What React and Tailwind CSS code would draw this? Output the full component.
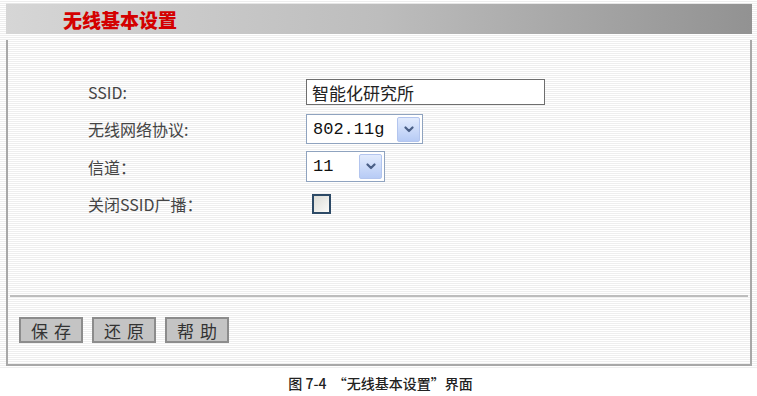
const cjk = 'font-["Noto_Sans_CJK_SC","Noto_Sans",sans-serif]'

function Chevron() {
  return (
    <svg width="10" height="7" viewBox="0 0 10 7" fill="none">
      <path d="M1.5 1.5l3.5 3.5 3.5-3.5" stroke="#4a5f86" strokeWidth="2.2" strokeLinecap="round" strokeLinejoin="round" />
    </svg>
  )
}

function Select({ value, width }) {
  return (
    <div className={`flex items-center justify-between ${width} h-full border border-[#8fa3bf] bg-white pl-[6px] pr-[2px]`}>
      <span className='font-["Liberation_Mono",monospace] text-[17px] text-[#111] leading-none'>{value}</span>
      <span className="flex items-center justify-center w-[23px] h-[25px] rounded-[2px] border border-[#b3c5ee] bg-gradient-to-b from-[#e2ebfd] to-[#b7cbf5]">
        <Chevron />
      </span>
    </div>
  )
}

function Row({ label, height, mt, children }) {
  return (
    <div className={`flex items-center ${height} ${mt}`}>
      <div className={`w-[298px] pl-[80px] text-[16px] text-[#444] leading-none ${cjk}`}>{label}</div>
      <div className="flex items-center h-full">{children}</div>
    </div>
  )
}

function Btn({ children }) {
  return (
    <button className={`w-[64px] h-[26px] border-2 border-[#8c8c8c] bg-[#c4c4c4] text-[17px] tracking-[6px] pl-[6px] text-[#333] leading-none ${cjk}`}>
      {children}
    </button>
  )
}

export default function App() {
  return (
    <div className="w-[757px] h-[396px] bg-white">
      <div className="h-[368px] pt-[3px] bg-[repeating-linear-gradient(to_bottom,#ffffff_0px,#ffffff_1px,#eeeeee_1px,#eeeeee_2px)]">
        <div className="ml-[6px] w-[746px] h-[31px] flex items-center pl-[57px] bg-gradient-to-r from-[#d6d6d6] via-[#bdbdbd] to-[#929292] border-t border-[#e6e6e6]">
          <span className={`text-[19px] font-black text-[#d40000] leading-none ${cjk}`}>无线基本设置</span>
        </div>

        <div className="ml-[6px] mt-[6px] w-[746px] h-[326px] border-l-2 border-r-2 border-b-2 border-[#a8a8a8] flex flex-col">
          <div className="pt-[39px]">
            <Row label="SSID:" height="h-[26px]" mt="mt-0">
              <div className={`w-[239px] h-[26px] border border-[#6e6e6e] bg-white pl-[5px] flex items-center text-[17px] text-[#222] leading-none ${cjk}`}>
                智能化研究所
              </div>
            </Row>
            <Row label="无线网络协议:" height="h-[30px]" mt="mt-[9px]">
              <Select value="802.11g" width="w-[117px]" />
            </Row>
            <Row label="信道：" height="h-[31px]" mt="mt-[7px]">
              <Select value="11" width="w-[79px]" />
            </Row>
            <Row label="关闭SSID广播：" height="h-[20px]" mt="mt-[12px]">
              <span className="ml-[6px] w-[19px] h-[20px] border-2 border-[#2d4a66] bg-gradient-to-br from-[#dcdcd6] to-[#fafaf8]" />
            </Row>
          </div>

          <div className="mt-auto mx-[2px] h-[2px] bg-[#bdbdbd]" />
          <div className="flex gap-[9px] pl-[11px] pt-[20px] pb-[21px]">
            <Btn>保存</Btn>
            <Btn>还原</Btn>
            <Btn>帮助</Btn>
          </div>
        </div>
      </div>
      <div className={`text-center pt-[8px] pl-[4px] text-[14px] font-medium text-[#222] leading-none ${cjk}`}>
        图 7-4 &nbsp;“无线基本设置”界面
      </div>
    </div>
  )
}
